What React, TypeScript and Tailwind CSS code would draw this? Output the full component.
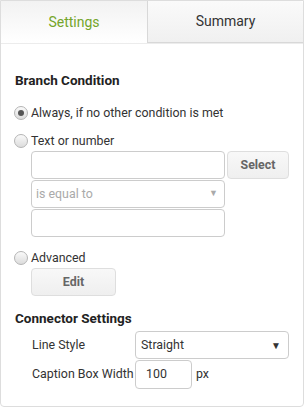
import React from 'react';

function Radio({ checked, label }: { checked?: boolean; label: string }) {
  return (
    <label className="flex items-center h-[20px] text-[12.4px] text-[#333]">
      <span className="w-[14px] h-[14px] rounded-full border border-[#b5b5b5] bg-gradient-to-b from-[#fafafa] to-[#dcdcdc] flex items-center justify-center shrink-0">
        {checked && <span className="w-[6px] h-[6px] rounded-full bg-[#555]" />}
      </span>
      <span className="ml-[3px]">{label}</span>
    </label>
  );
}

function Box({ className = '', children }: { className?: string; children?: React.ReactNode }) {
  return (
    <div className={`h-[28px] border border-[#ccc] rounded-[4px] bg-white flex items-center ${className}`}>
      {children}
    </div>
  );
}

export default function App() {
  return (
    <div className="w-[304px] h-[407px] bg-white border border-[#ddd] rounded-b-[4px] font-['Roboto',sans-serif] flex flex-col">
      <div className="flex h-[43px] border-b border-[#ececec]">
        <div className="w-[146px] flex items-center justify-center text-[14px] text-[#74a52a] bg-gradient-to-b from-[#f2f2f2] to-white">
          Settings
        </div>
        <div className="flex-1 flex items-center justify-center text-[14px] text-[#333] bg-gradient-to-b from-[#fafafa] to-[#f0f0f0] border-l border-b border-[#d8d8d8] rounded-tr-[4px]">
          Summary
        </div>
      </div>

      <div className="px-[13px] pt-[26px] whitespace-nowrap">
        <h2 className="text-[13.5px] font-bold text-[#222] leading-[20px] pl-[1px]">Branch Condition</h2>

        <div className="mt-[13px]">
          <Radio checked label="Always, if no other condition is met" />
        </div>
        <div className="mt-[8px]">
          <Radio label="Text or number" />
        </div>

        <div className="ml-[17px] flex flex-col gap-[1px]">
          <div className="flex gap-[2px]">
            <Box className="w-[194px]" />
            <button className="w-[62px] h-[28px] rounded-[4px] border border-[#dedede] bg-gradient-to-b from-[#f8f8f8] to-[#efefef] text-[12.4px] font-bold text-[#666]">
              Select
            </button>
          </div>
          <Box className="w-[194px] border-[#bbb] pl-[4px] pr-[6px] justify-between">
            <span className="text-[12.4px] text-[#aaa]">is equal to</span>
            <span className="text-[9px] text-[#aaa]">▼</span>
          </Box>
          <Box className="w-[194px]" />
        </div>

        <div className="mt-[11px]">
          <Radio label="Advanced" />
        </div>
        <button className="ml-[17px] w-[85px] h-[28px] rounded-[4px] border border-[#dedede] bg-gradient-to-b from-[#f8f8f8] to-[#efefef] text-[12.4px] font-bold text-[#666]">
          Edit
        </button>

        <h2 className="mt-[12px] text-[13.5px] font-bold text-[#222] leading-[20px] pl-[1px]">Connector Settings</h2>

        <div className="ml-[17px] mt-[3px] flex flex-col gap-[1px]">
          <div className="flex items-center">
            <span className="w-[104px] pl-[1px] text-[12.4px] text-[#333]">Line Style</span>
            <Box className="w-[154px] border-[#bbb] pl-[5px] pr-[7px] justify-between">
              <span className="text-[12.4px] text-[#333]">Straight</span>
              <span className="text-[10px] text-[#333]">▼</span>
            </Box>
          </div>
          <div className="flex items-center">
            <span className="w-[104px] pl-[1px] text-[12.4px] text-[#333]">Caption Box Width</span>
            <Box className="w-[57px] h-[29px] pl-[10px]">
              <span className="text-[12.4px] text-[#333]">100</span>
            </Box>
            <span className="ml-[4px] text-[12.4px] text-[#333]">px</span>
          </div>
        </div>
      </div>
    </div>
  );
}
